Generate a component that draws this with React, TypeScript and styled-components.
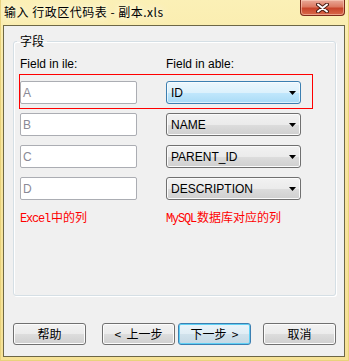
import React from 'react';
import styled, { createGlobalStyle } from 'styled-components';

const Global = createGlobalStyle`
  html, body { margin: 0; padding: 0; }
  body {
    width: 349px; height: 361px; overflow: hidden;
    font-family: "Liberation Sans", "Noto Sans CJK SC", sans-serif;
    font-size: 12px;
  }
`;

const Window = styled.div`
  width: 349px; height: 361px; box-sizing: border-box;
  display: flex; flex-direction: column;
  padding: 0 4px 4px 3px;
  background: linear-gradient(to bottom, #fbf0b6 0%, #f8e6a0 30%, #f6e296 100%);
  box-shadow: inset 1px 0 0 #e9d27c, inset -1px 0 0 #e9d27c, inset 0 -1px 0 #e9d27c;
`;

const TitleBar = styled.div`
  height: 25px; flex: none;
  display: flex; justify-content: space-between; align-items: flex-start;
  padding-left: 1px;
`;

const TitleText = styled.div`
  margin-top: 4px;
  line-height: 16px;
  font-family: "Noto Sans CJK SC", sans-serif;
  font-size: 12px;
  letter-spacing: 0.5px;
  color: #000;
  text-shadow: 0 0 6px #fffbe6, 0 0 10px #fffbe6;
`;

const CloseButton = styled.div`
  width: 45px; height: 16px; box-sizing: border-box;
  display: flex; align-items: center; justify-content: center;
  border: 1px solid #7d2a1a; border-top: none;
  border-radius: 0 0 4px 4px;
  background: linear-gradient(to bottom, #e9a998 0%, #dc7a62 45%, #c8452b 55%, #d9684a 100%);
  box-shadow: inset 0 0 0 1px rgba(255, 220, 200, 0.5);
`;

const Client = styled.div`
  flex: 1;
  display: flex; flex-direction: column;
  border: 1px solid #6d6746;
  background: #f0f0f0;
  padding: 0 8px 11px 9px;
`;

const Group = styled.fieldset`
  flex: 1; min-width: 0; margin: 7px 0 0 0;
  padding: 7px 6px 0 6px;
  border: 1px solid #d5dfe5;
  border-radius: 3px;
  box-shadow: inset 1px 1px 0 #ffffff, 1px 1px 0 #ffffff;
`;

const Legend = styled.legend`
  padding: 0 3px; margin-left: -3px;
  line-height: 16px;
  font-family: "Noto Sans CJK SC", sans-serif;
  font-size: 12px; color: #000;
`;

const FieldGrid = styled.div`
  position: relative;
  display: grid;
  grid-template-columns: 117px 135px;
  grid-template-rows: 16px repeat(4, 23px) 16px;
  column-gap: 29px; row-gap: 9px;
`;

const ColumnLabel = styled.div`
  line-height: 16px; color: #000;
  font-family: "Liberation Sans", sans-serif; font-size: 12px;
`;

const TextBox = styled.div`
  box-sizing: border-box; height: 23px;
  display: flex; align-items: center;
  padding-left: 2px;
  background: #fff;
  border: 1px solid #abadb3;
  border-radius: 2px;
  color: #8a8a96;
  font-family: "Liberation Sans", sans-serif; font-size: 12px;
`;

const Combo = styled.div<{ $hot?: boolean }>`
  box-sizing: border-box; height: 23px;
  display: flex; align-items: center; justify-content: space-between;
  padding: 0 4px 0 4px;
  border: 1px solid ${p => (p.$hot ? '#3c7fb1' : '#707070')};
  border-radius: 3px;
  background: ${p =>
    p.$hot
      ? 'linear-gradient(to bottom, #ecf7fd 0%, #dcf1fc 50%, #c1e7fc 51%, #a9dbf6 100%)'
      : 'linear-gradient(to bottom, #f2f2f2 0%, #ebebeb 50%, #dddddd 51%, #cfcfcf 100%)'};
  box-shadow: inset 0 0 0 1px ${p => (p.$hot ? 'rgba(255,255,255,0.6)' : '#fbfbfb')};
  color: #000;
  font-family: "Liberation Sans", sans-serif; font-size: 12px;
`;

const Note = styled.div`
  line-height: 16px; color: #ff0000;
  font-family: "Noto Sans CJK SC", sans-serif; font-size: 12px;
  white-space: nowrap;
`;

const Mono = styled.span`
  font-family: "Liberation Mono", monospace; font-size: 12px;
  letter-spacing: -1.2px;
  margin-right: 1px;
`;

const Highlight = styled.div`
  position: absolute; left: -1px; top: 18px;
  width: 294px; height: 35px; box-sizing: border-box;
  border: 1px solid #ff0000;
  pointer-events: none;
`;

const ButtonRow = styled.div`
  margin-top: 27px; height: 22px; flex: none;
  display: flex; align-items: center;
`;

const Spacer = styled.div`
  flex: 1;
`;

const Button = styled.button<{ $default?: boolean; $gap?: number }>`
  width: 73px; height: 22px; box-sizing: border-box; padding: 0;
  margin-left: ${p => p.$gap ?? 0}px;
  border: 1px solid ${p => (p.$default ? '#3c7fb1' : '#707070')};
  border-radius: 3px;
  background: ${p =>
    p.$default
      ? 'linear-gradient(to bottom, #eaf4fa 0%, #e0edf5 50%, #d1e2ec 51%, #c4d8e4 100%)'
      : 'linear-gradient(to bottom, #f2f2f2 0%, #ebebeb 50%, #dddddd 51%, #cfcfcf 100%)'};
  box-shadow: inset 0 0 0 1px ${p => (p.$default ? '#5fd0f5' : '#fcfcfc')};
  font-family: "Noto Sans CJK SC", sans-serif; font-size: 12px; color: #000;
  line-height: 16px;
  white-space: pre;
`;

const Arrow = () => (
  <svg width="7" height="4" viewBox="0 0 7 4">
    <polygon points="0,0 7,0 3.5,4" fill="#000" />
  </svg>
);

const CloseX = () => (
  <svg width="13" height="10" viewBox="0 0 13 10">
    <path d="M2 1.5 L11 8.5 M11 1.5 L2 8.5" stroke="#4a1d14" strokeWidth="4" strokeLinecap="round" />
    <path d="M2 1.5 L11 8.5 M11 1.5 L2 8.5" stroke="#ffffff" strokeWidth="2" strokeLinecap="round" />
  </svg>
);

const rows = [
  { file: 'A', table: 'ID', hot: true },
  { file: 'B', table: 'NAME' },
  { file: 'C', table: 'PARENT_ID' },
  { file: 'D', table: 'DESCRIPTION' },
];

export default function App() {
  return (
    <>
      <Global />
      <Window>
        <TitleBar>
          <TitleText>输入 行政区代码表 - 副本.xls</TitleText>
          <CloseButton>
            <CloseX />
          </CloseButton>
        </TitleBar>
        <Client>
          <Group>
            <Legend>字段</Legend>
            <FieldGrid>
              <ColumnLabel>Field in ile:</ColumnLabel>
              <ColumnLabel>Field in able:</ColumnLabel>
              {rows.map(r => (
                <React.Fragment key={r.file}>
                  <TextBox>{r.file}</TextBox>
                  <Combo $hot={r.hot}>
                    <span>{r.table}</span>
                    <Arrow />
                  </Combo>
                </React.Fragment>
              ))}
              <Note>
                <Mono>Excel</Mono>中的列
              </Note>
              <Note>
                <Mono>MySQL</Mono>数据库对应的列
              </Note>
              <Highlight />
            </FieldGrid>
          </Group>
          <ButtonRow>
            <Button>帮助</Button>
            <Spacer />
            <Button>{'<  上一步'}</Button>
            <Button $default $gap={3}>{'下一步  >'}</Button>
            <Button $gap={12}>取消</Button>
          </ButtonRow>
        </Client>
      </Window>
    </>
  );
}
